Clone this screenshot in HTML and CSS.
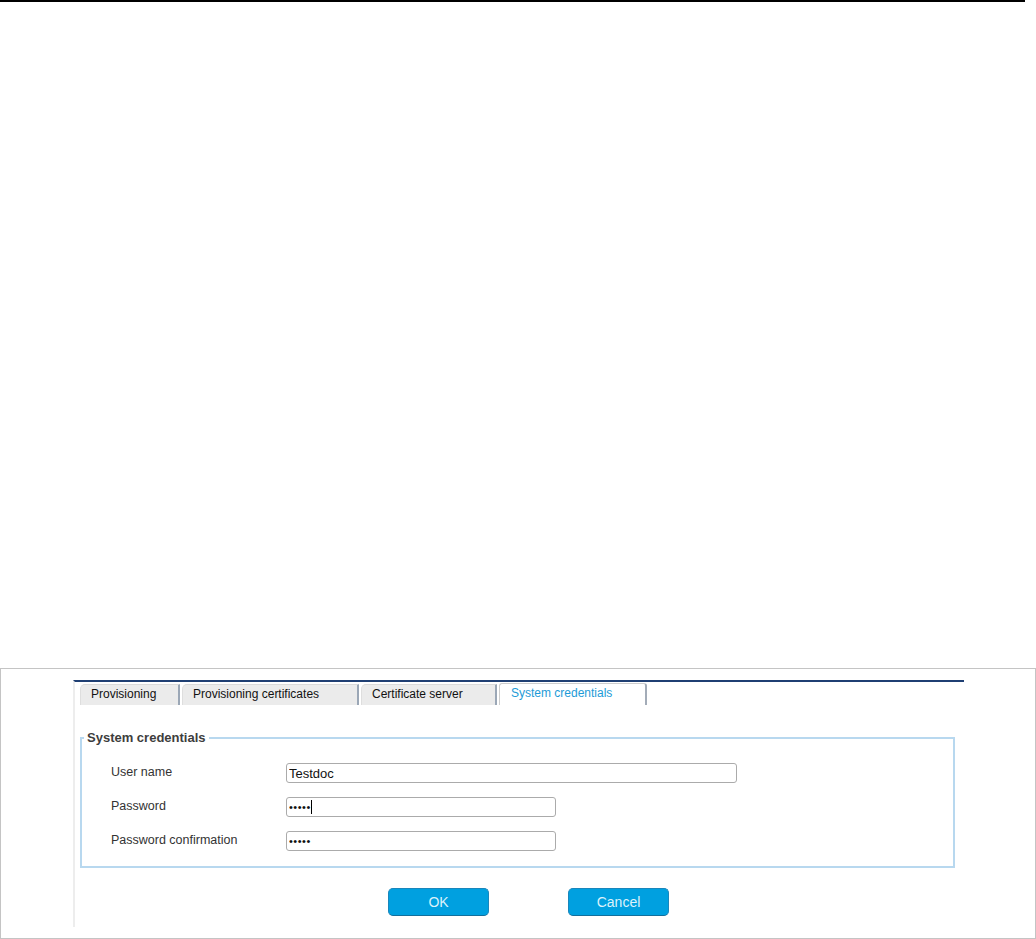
FILE: index.html
```html
<!DOCTYPE html>
<html lang="en">
<head>
<meta charset="utf-8">
<title>System credentials</title>
<link rel="stylesheet" href="styles.css">
</head>
<body>
<div class="topline"></div>
<div class="spacer"></div>
<div class="frame">
  <div class="panel">
    <div class="tabs">
      <div class="tab tab-1">Provisioning</div>
      <div class="tab tab-2">Provisioning certificates</div>
      <div class="tab tab-3">Certificate server</div>
      <div class="tab tab-active">System credentials</div>
    </div>
    <fieldset class="group">
      <legend class="group-title">System credentials</legend>
      <div class="form-grid">
        <label class="field-label" for="user">User name</label>
        <input class="field field-wide" id="user" type="text" value="Testdoc">
        <label class="field-label" for="pw">Password</label>
        <div class="field-wrap">
          <input class="field field-short field-secret" id="pw" type="password" value="aaaaa">
          <span class="caret"></span>
        </div>
        <label class="field-label" for="pw2">Password confirmation</label>
        <input class="field field-short field-secret" id="pw2" type="password" value="aaaaa">
      </div>
    </fieldset>
    <div class="actions">
      <button class="btn" type="button">OK</button>
      <button class="btn" type="button">Cancel</button>
    </div>
  </div>
</div>
</body>
</html>
```
FILE: styles.css
```css
html, body {
  margin: 0;
  padding: 0;
  background: #ffffff;
  font-family: "Liberation Sans", Arial, sans-serif;
  color: #000;
}

.topline {
  width: 1025px;
  height: 2px;
  background: #000;
}

.spacer {
  height: 666px;
}

.frame {
  box-sizing: border-box;
  width: 1036px;
  height: 271px;
  border: 1px solid #c4c4c4;
  padding: 11px 0 0 72px;
}

.panel {
  box-sizing: border-box;
  width: 891px;
  border-top: 2px solid #1f3f73;
  border-left: 2px solid #ededed;
  padding: 1px 0 11px 5px;
}

.tabs {
  display: flex;
  align-items: flex-end;
  gap: 2px;
  height: 22px;
}

.tab {
  box-sizing: border-box;
  height: 21px;
  background: #ebebeb;
  border-top: 1px solid #dadada;
  border-left: 1px solid #dedede;
  border-right: 2px solid #9ba7b6;
  border-top-left-radius: 5px;
  padding-left: 10px;
  font-size: 12px;
  line-height: 18px;
  color: #111;
  white-space: nowrap;
}

.tab-1 { width: 100px; }
.tab-2 { width: 177px; }
.tab-3 { width: 136px; }

.tab-active {
  box-sizing: border-box;
  width: 148px;
  height: 22px;
  background: #ffffff;
  border-top: 1px solid #cdcdcd;
  border-left: 1px solid #cdcdcd;
  border-right: 2px solid #a3acb8;
  border-top-left-radius: 3px;
  border-top-right-radius: 3px;
  padding-left: 11px;
  font-size: 12px;
  line-height: 19px;
  color: #1d9bd7;
  white-space: nowrap;
}

.group {
  box-sizing: border-box;
  width: 875px;
  margin: 25px 0 0 0;
  border: 2px solid #b8d8ef;
  padding: 17px 0 15px 0;
  min-inline-size: 0;
}

.group-title {
  margin-left: 2px;
  padding: 0 3px;
  font-size: 13px;
  font-weight: bold;
  line-height: 16px;
  color: #3d3d3d;
}

.form-grid {
  display: grid;
  grid-template-columns: 175px auto;
  row-gap: 14px;
  align-items: center;
  justify-items: start;
  padding-left: 29px;
}

.field-label {
  font-size: 12.5px;
  color: #333;
  line-height: 16px;
  margin-top: -3px;
}

.field-wrap {
  position: relative;
  display: flex;
}

.field {
  box-sizing: border-box;
  height: 20px;
  margin: 0;
  border: 1px solid #ababab;
  border-radius: 3px;
  padding: 0 2px;
  font-family: "Liberation Sans", Arial, sans-serif;
  font-size: 13px;
  color: #111;
  background: #fff;
  outline: none;
}

.field-secret {
  font-size: 11px;
  letter-spacing: 0.5px;
}

.field-wide { width: 451px; }
.field-short { width: 270px; }

.caret {
  position: absolute;
  left: 25px;
  top: 3px;
  width: 1px;
  height: 14px;
  background: #000;
}

.actions {
  display: flex;
  gap: 79px;
  margin: 20px 0 0 308px;
}

.btn {
  box-sizing: border-box;
  width: 101px;
  height: 28px;
  margin: 0;
  padding: 0;
  background: #00a0e0;
  border: 1px solid #1a86bb;
  border-bottom-color: #136f9c;
  border-radius: 5px;
  color: #dcf2fb;
  font-family: "Liberation Sans", Arial, sans-serif;
  font-size: 14px;
  line-height: 26px;
  cursor: pointer;
}
```
